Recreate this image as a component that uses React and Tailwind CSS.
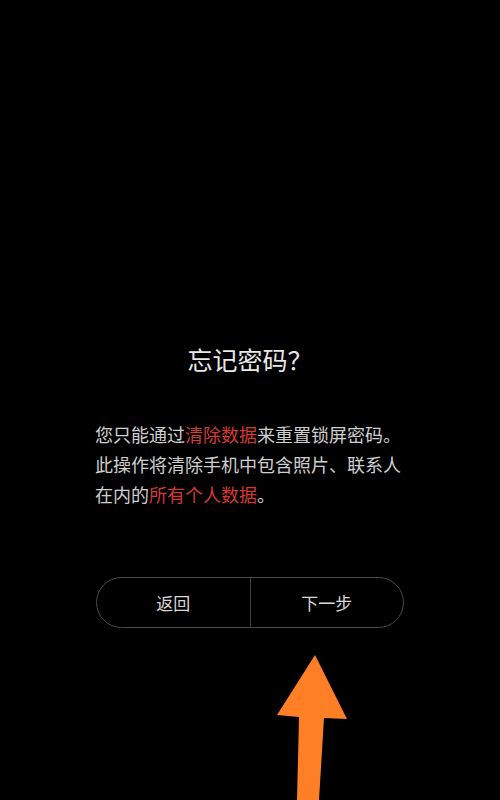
import React from 'react';

const cjk = { fontFamily: '"Noto Sans CJK SC", "Noto Sans", sans-serif' };

const ForgotPasswordPage = () => {
  return (
    <div className="relative w-[500px] h-[800px] bg-black overflow-hidden" style={cjk}>
      <div className="flex flex-col items-center pt-[342px]">
        {/* Title */}
        <h1 className="text-[25px] leading-[34px] text-[#e8e8e8] font-normal">忘记密码？</h1>

        {/* Warning text */}
        <p className="mt-[43px] w-[310px] text-[18px] leading-[30px] text-[#cfcfcf]">
          您只能通过<span className="text-[#d23a33]">清除数据</span>来重置锁屏密码。此操作将清除手机中包含照片、联系人在内的<span className="text-[#d23a33]">所有个人数据</span>。
        </p>

        {/* Buttons */}
        <div className="mt-[68px] flex w-[308px] h-[51px] rounded-full border border-[#4a4a4a]">
          <button className="flex-1 text-[17px] text-[#d8d8d8]">返回</button>
          <div className="w-px bg-[#3e3e3e]" />
          <button className="flex-1 text-[17px] text-[#d8d8d8]">下一步</button>
        </div>
      </div>

      {/* Orange arrow overlay */}
      <svg className="absolute left-0 top-0" width="500" height="800" viewBox="0 0 500 800">
        <polygon
          points="315,655 347,719 324,718 319,800 297,800 299,717 277,715"
          fill="#ff7f27"
        />
      </svg>
    </div>
  );
};

export default ForgotPasswordPage;
